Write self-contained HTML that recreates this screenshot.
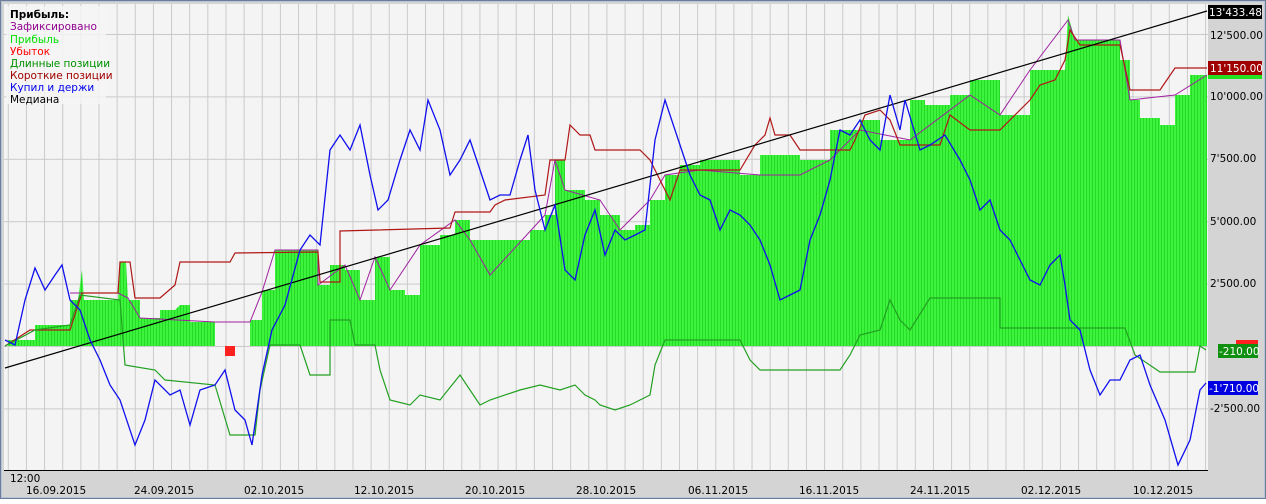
<!DOCTYPE html>
<html><head><meta charset="utf-8"><style>
html,body{margin:0;padding:0;background:#fff}
body{width:1266px;height:499px;overflow:hidden}
svg text{font-family:"DejaVu Sans","Liberation Sans",sans-serif;font-size:10.5px}
</style></head><body>
<svg width="1266" height="499" viewBox="0 0 1266 499" xmlns="http://www.w3.org/2000/svg">
<defs>
<pattern id="vg" patternUnits="userSpaceOnUse" x="7.8" y="0" width="18.14" height="10"><rect x="0" y="0" width="1" height="10" fill="#cacaca"/></pattern>
<pattern id="hg" patternUnits="userSpaceOnUse" x="0" y="34" width="10" height="62.4"><rect x="0" y="0" width="10" height="1" fill="#cacaca"/></pattern>
<pattern id="st" patternUnits="userSpaceOnUse" width="3" height="10"><rect width="3" height="10" fill="#3cf43c"/><rect width="1" height="10" fill="#28d828"/></pattern>
</defs>
<rect x="0" y="0" width="1266" height="499" fill="#d4d4d4"/>
<rect x="4" y="4" width="1204" height="466" fill="#f4f4f4"/>
<rect x="4" y="4" width="1204" height="466" fill="url(#vg)"/>
<rect x="4" y="4" width="1204" height="466" fill="url(#hg)"/>
<!-- profit fill -->
<polygon fill="url(#st)" points="8,346 8,340 35,340 35,325 70,325 70,300 78,300 82,270 84,300 118,300 120,262 126,262 128,300 140,300 140,318 160,318 160,310 175,310 180,305 190,305 190,322 215,322 215,346 250,346 250,320 262,320 262,290 275,290 275,250 318,250 318,285 330,285 330,265 345,265 345,270 360,270 360,300 375,300 375,257 390,257 390,290 405,290 405,295 420,295 420,245 440,245 440,235 455,235 455,220 470,220 470,240 530,240 530,230 545,230 545,215 555,215 555,160 565,160 565,190 585,190 585,200 600,200 600,215 620,215 620,230 635,230 635,225 650,225 650,200 665,200 665,175 680,175 680,165 700,165 700,160 740,160 740,175 760,175 760,155 800,155 800,160 830,160 830,130 860,130 860,120 880,120 880,140 910,140 910,100 925,100 925,105 950,105 950,95 970,95 970,80 1000,80 1000,115 1030,115 1030,70 1065,70 1068,15 1075,40 1120,40 1120,60 1130,60 1130,100 1140,100 1140,118 1160,118 1160,125 1175,125 1175,95 1190,95 1190,75 1207,75 1207,346"/>
<polygon fill="#ff2020" points="225,346 225,356 235,356 235,346"/>
<!-- purple fixed -->
<polyline fill="none" stroke="#a020a0" stroke-width="1" points="70,293 118,293 128,298 140,318 215,322 250,322 262,292 275,250 318,250 318,285 345,265 360,300 375,257 390,290 420,245 455,220 470,240 490,275 545,215 555,160 565,190 600,200 620,230 650,200 665,175 700,170 760,175 800,175 830,160 860,130 910,140 970,95 1000,115 1030,70 1068,20 1075,40 1120,40 1130,100 1175,95 1207,75"/>
<!-- short positions -->
<polyline fill="none" stroke="#b01818" stroke-width="1.2" points="5,346 30,330 70,330 82,293 118,293 120,262 130,262 135,298 160,298 175,285 180,262 230,262 235,253 318,252 320,282 340,282 340,231 450,228 455,212 490,212 495,205 505,200 545,195 550,160 565,160 570,125 580,135 590,135 595,150 640,150 650,160 670,200 680,170 740,170 755,145 765,135 770,118 775,135 790,135 800,150 850,150 855,140 865,115 880,110 890,120 900,145 940,145 950,115 970,130 1000,130 1030,100 1040,85 1055,80 1065,60 1070,30 1080,45 1120,45 1130,90 1160,90 1175,68 1207,68"/>
<!-- long positions -->
<polyline fill="none" stroke="#22a022" stroke-width="1.2" points="5,346 35,330 70,325 80,295 120,300 125,365 155,370 165,380 215,385 230,435 255,435 260,390 270,345 300,345 310,375 330,375 330,320 350,320 355,345 375,345 380,370 390,400 410,405 420,395 440,400 460,375 480,405 490,400 520,390 540,385 560,390 575,385 585,395 595,400 600,405 615,410 630,405 650,395 655,365 665,340 740,340 750,360 760,370 840,370 850,355 860,335 880,330 890,300 900,320 910,330 930,298 1000,298 1000,328 1125,328 1135,355 1160,372 1195,372 1200,346 1206,350"/>
<!-- median -->
<line x1="5" y1="368" x2="1207" y2="11" stroke="#000" stroke-width="1.2"/>
<!-- buy and hold -->
<polyline fill="none" stroke="#1010ee" stroke-width="1.3" points="5,340 15,345 25,300 35,268 45,290 55,275 62,265 70,300 80,310 90,340 100,360 110,385 120,400 135,445 145,420 155,380 170,395 180,390 190,425 200,390 215,385 225,370 235,410 245,420 252,445 262,375 272,330 285,305 300,250 310,235 320,245 330,150 340,135 350,150 360,125 370,175 378,210 388,200 400,160 410,130 420,150 428,100 440,130 450,175 460,160 470,140 480,170 490,200 500,195 510,195 520,160 528,135 535,190 545,230 555,205 565,270 575,280 585,235 595,210 605,255 615,230 625,240 635,235 645,230 655,140 665,100 680,145 690,175 700,195 710,200 720,230 730,210 740,215 750,225 760,240 770,265 780,300 790,295 800,290 810,240 820,215 830,180 840,130 850,135 860,120 870,140 880,150 890,95 900,130 905,100 920,150 930,145 945,135 960,160 970,180 980,210 990,200 1000,230 1010,240 1020,260 1030,280 1040,285 1050,265 1060,255 1065,285 1070,320 1080,330 1090,370 1100,395 1110,380 1120,380 1130,360 1140,355 1150,385 1165,420 1178,465 1190,440 1200,390 1206,383"/>
<!-- axis panels -->
<rect x="1208" y="4" width="54" height="466" fill="#d4d4d4"/>
<rect x="4" y="470" width="1258" height="26" fill="#d4d4d4"/>
<line x1="4" y1="470.5" x2="1208" y2="470.5" stroke="#000"/>
<rect x="0.5" y="0.5" width="1265" height="498" fill="none" stroke="#6d7d98" stroke-width="1"/>
<rect x="1.5" y="1.5" width="1263" height="496" fill="none" stroke="#b8c4d8" stroke-width="1"/>
<!-- right axis labels -->
<g fill="#000">
<text x="1210" y="39">12'500.00</text>
<text x="1210" y="100">10'000.00</text>
<text x="1210" y="162">7'500.00</text>
<text x="1210" y="225">5'000.00</text>
<text x="1210" y="287">2'500.00</text>
<text x="1210" y="412">-2'500.00</text>
</g>
<rect x="1208" y="69" width="54" height="10" fill="#22e022"/>
<rect x="1208" y="5" width="54" height="14" fill="#000"/><text x="1209" y="16" fill="#fff">13'433.48</text>
<rect x="1208" y="61" width="54" height="14" fill="#a00000"/><text x="1210" y="72" fill="#fff">11'150.00</text>
<rect x="1236" y="340" width="22" height="6" fill="#ff2020"/>
<rect x="1218" y="344" width="40" height="14" fill="#109010"/><text x="1219" y="355" fill="#fff">-210.00</text>
<rect x="1208" y="381" width="50" height="14" fill="#0000e0"/><text x="1209" y="392" fill="#fff">-1'710.00</text>
<!-- bottom labels -->
<text x="10" y="482">12:00</text>
<g>
<text x="26" y="494">16.09.2015</text>
<text x="134" y="494">24.09.2015</text>
<text x="244" y="494">02.10.2015</text>
<text x="354" y="494">12.10.2015</text>
<text x="465" y="494">20.10.2015</text>
<text x="576" y="494">28.10.2015</text>
<text x="688" y="494">06.11.2015</text>
<text x="799" y="494">16.11.2015</text>
<text x="910" y="494">24.11.2015</text>
<text x="1021" y="494">02.12.2015</text>
<text x="1133" y="494">10.12.2015</text>
</g>
<!-- legend -->
<rect x="6" y="6" width="100" height="98" fill="#f4f4f4" opacity="0.85"/>
<g font-size="10.5">
<text x="10" y="18" font-weight="bold" fill="#000">Прибыль:</text>
<text x="10" y="30" fill="#900090">Зафиксировано</text>
<text x="10" y="43" fill="#00e000">Прибыль</text>
<text x="10" y="55" fill="#ff0000">Убыток</text>
<text x="10" y="67" fill="#009000">Длинные позиции</text>
<text x="10" y="79" fill="#a00000">Короткие позиции</text>
<text x="10" y="91" fill="#0000ee">Купил и держи</text>
<text x="10" y="103" fill="#000">Медиана</text>
</g>
</svg>
</body></html>
